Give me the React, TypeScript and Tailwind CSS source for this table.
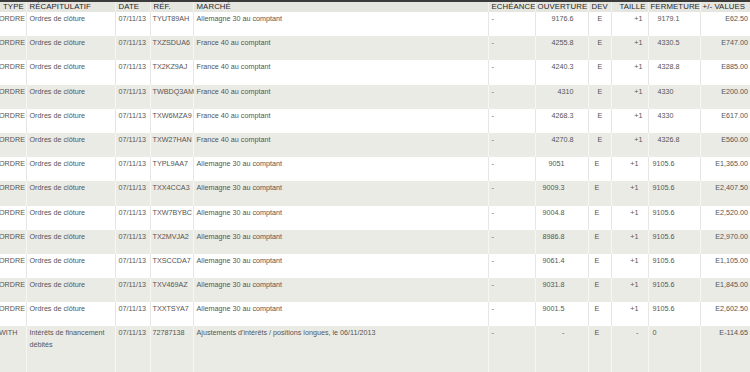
import React from "react";

type Row = {
  type: string;
  recap: string;
  date: string;
  ref: string;
  marche: string;
  echeance: string;
  ouverture: string;
  dev: string;
  taille: string;
  fermeture: string;
  values: string;
};

const ordre = (ref: string, marche: string, ouverture: string, fermeture: string, values: string): Row => ({
  type: "ORDRE",
  recap: "Ordres de clôture",
  date: "07/11/13",
  ref,
  marche,
  echeance: "-",
  ouverture,
  dev: "E",
  taille: "+1",
  fermeture,
  values,
});

const DAX = "Allemagne 30 au comptant";
const CAC = "France 40 au comptant";

const rows: Row[] = [
  ordre("TYUT89AH", DAX, "9176.6", "9179.1", "E62.50"),
  ordre("TXZSDUA6", CAC, "4255.8", "4330.5", "E747.00"),
  ordre("TX2KZ9AJ", CAC, "4240.3", "4328.8", "E885.00"),
  ordre("TWBDQ3AM", CAC, "4310", "4330", "E200.00"),
  ordre("TXW6MZA9", CAC, "4268.3", "4330", "E617.00"),
  ordre("TXW27HAN", CAC, "4270.8", "4326.8", "E560.00"),
  ordre("TYPL9AA7", DAX, "9051", "9105.6", "E1,365.00"),
  ordre("TXX4CCA3", DAX, "9009.3", "9105.6", "E2,407.50"),
  ordre("TXW7BYBC", DAX, "9004.8", "9105.6", "E2,520.00"),
  ordre("TX2MVJA2", DAX, "8986.8", "9105.6", "E2,970.00"),
  ordre("TXSCCDA7", DAX, "9061.4", "9105.6", "E1,105.00"),
  ordre("TXV469AZ", DAX, "9031.8", "9105.6", "E1,845.00"),
  ordre("TXXTSYA7", DAX, "9001.5", "9105.6", "E2,602.50"),
  {
    type: "WITH",
    recap: "Intérêts de financement débités",
    date: "07/11/13",
    ref: "72787138",
    marche: "Ajustements d'intérêts / positions longues, le 06/11/2013",
    echeance: "-",
    ouverture: "-",
    dev: "E",
    taille: "-",
    fermeture: "0",
    values: "E-114.65",
  },
];

const widths = [26, 89, 35, 43, 295, 47, 53, 23, 37, 52, 50];

const headers = [
  { label: "Type", cls: "text-left pl-[3px]" },
  { label: "Récapitulatif", cls: "text-left pl-[3px]" },
  { label: "Date", cls: "text-left pl-[3px]" },
  { label: "Réf.", cls: "text-left pl-[3px]" },
  { label: "Marché", cls: "text-left pl-[3px]" },
  { label: "Echéance", cls: "text-left pl-[3px]" },
  { label: "Ouverture", cls: "text-left pl-[2px]" },
  { label: "Dev", cls: "text-left pl-[3px]" },
  { label: "Taille", cls: "text-right pr-[2px]" },
  { label: "Fermeture", cls: "text-left pl-[2px]" },
  { label: "+/- Values", cls: "text-left pl-[2px]" },
];

export default function App() {
  return (
    <div className="w-[750px] h-[372px] overflow-hidden bg-white border-t-2 border-[#3b3b3b]">
      <table className="table-fixed border-collapse w-[750px]">
        <colgroup>
          {widths.map((w, i) => (
            <col key={i} style={{ width: w }} />
          ))}
        </colgroup>
        <thead>
          <tr className="bg-[#e6e6e1] h-[10px]">
            {headers.map((h, i) => (
              <th
                key={i}
                className={`${h.cls} font-normal uppercase text-[7.8px] tracking-[0.1px] leading-[10px] text-[#262626] whitespace-nowrap border-r border-[#f2f2ef] font-['Liberation_Sans',Arial,sans-serif]`}
              >
                {h.label}
              </th>
            ))}
          </tr>
        </thead>
        <tbody className="font-['Liberation_Sans',Arial,sans-serif] text-[7.2px] leading-[12px] text-[#555555]">
          {rows.map((r, i) => {
            const odd = i % 2 === 1;
            const late = i >= 6;
            const cell = `align-top pt-[1px] border-r ${odd ? "border-[#f6f6f4]" : "border-[#e6e6e3]"}`;
            return (
              <tr key={i} className={`${odd ? "bg-[#ebebe6]" : "bg-white"} ${i === rows.length - 1 ? "h-[48px]" : "h-[24.2px]"}`}>
                <td className={`${cell} pl-0 whitespace-nowrap overflow-visible`}>
                  <span className="-ml-[1px]">{r.type}</span>
                </td>
                <td className={`${cell} pl-[3px] pr-[4px]`}>{r.recap}</td>
                <td className={`${cell} pl-[3px]`}>{r.date}</td>
                <td className={`${cell} pl-[2px] whitespace-nowrap`}>{r.ref}</td>
                <td className={`${cell} pl-[3px]`}>{r.marche}</td>
                <td className={`${cell} pl-[3px]`}>{r.echeance}</td>
                <td className={`${cell} text-right ${late ? "pr-[23px]" : "pr-[14px]"}`}>{r.ouverture}</td>
                <td className={`${cell} ${late ? "pl-[6px]" : "pl-[9px]"}`}>{r.dev}</td>
                <td className={`${cell} text-right ${late ? "pr-[9px]" : "pr-[5px]"}`}>{r.taille}</td>
                <td className={`${cell} ${late ? "pl-[4px]" : "pl-[9px]"}`}>{r.fermeture}</td>
                <td className={`${cell} text-right pr-[2px] border-r-0`}>{r.values}</td>
              </tr>
            );
          })}
        </tbody>
      </table>
    </div>
  );
}
